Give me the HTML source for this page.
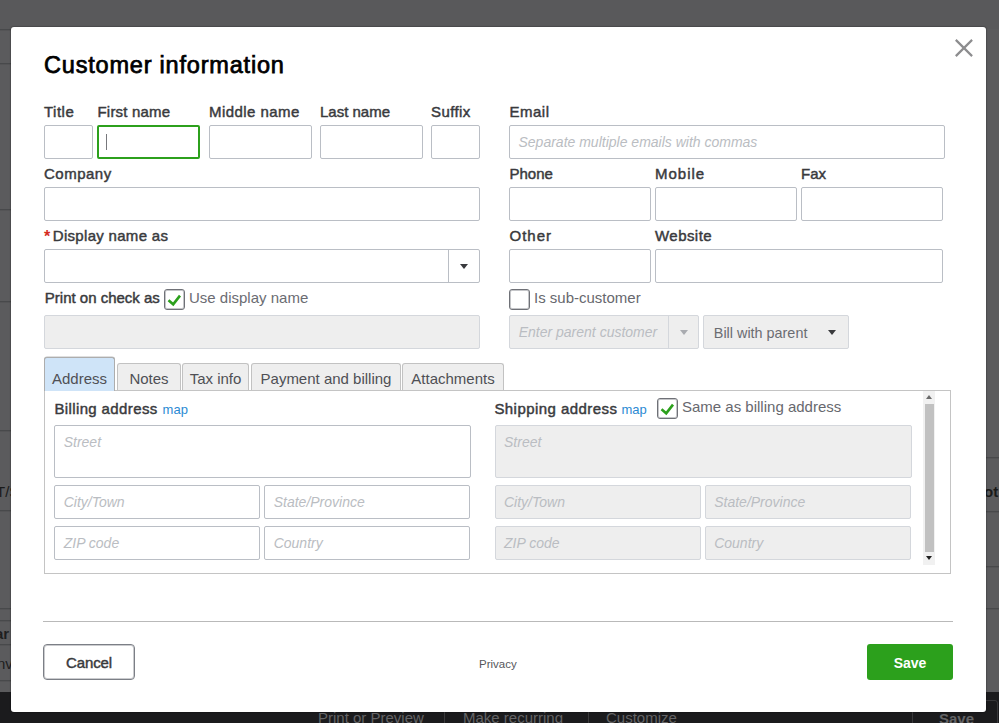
<!DOCTYPE html><html><head><meta charset="utf-8"><style>
*{margin:0;padding:0;box-sizing:border-box}
html,body{width:999px;height:723px;overflow:hidden;background:#59595b;font-family:"Liberation Sans",sans-serif}
.t{position:absolute;white-space:nowrap}
.bg{position:absolute;left:0;top:29px;width:999px;height:663px;background:#5b5b5d}
.bgl{position:absolute;height:1px;background:#48494b;box-shadow:0 1px 0 rgba(72,73,75,.35)}
.foot{position:absolute;left:0;top:692px;width:999px;height:31px;background:#1b1b1d}
.fsep{position:absolute;top:712px;width:1px;height:11px;background:#3a3a3c}
.fbtn{position:absolute;left:912px;top:700px;width:86px;height:40px;border:1px solid #38383a;border-radius:3px}
.modal{position:absolute;left:11px;top:27px;width:975px;height:685px;background:#fff;border-radius:3px;box-shadow:0 0 1px 1px rgba(0,0,0,.18)}
.x{position:absolute}
.inp{position:absolute;border:1px solid #babec5;border-radius:2px;background:#fff}
.inp.focus{border:2px solid #2ca01c}
.inp.dis{background:#eeeeee;border-color:#d4d7dc}
.caret{position:absolute;width:1px;height:16px;background:#77787c}
.vsep{position:absolute;width:1px}
.tri{position:absolute;width:0;height:0;border-left:4.5px solid transparent;border-right:4.5px solid transparent;border-top:5px solid #393a3d}
.tri.sm{border-left-width:3.5px;border-right-width:3.5px;border-top-width:4px}
.chk{position:absolute;border:1px solid #6f7177;border-radius:3px;background:#fff;box-shadow:inset 0 0 0 1px rgba(111,113,119,.4)}
.panel{position:absolute;left:44px;top:390px;width:907px;height:184px;border:1px solid #c4c4c4;background:#fff}
.tab{position:absolute;border:1px solid #c2c2c2;border-bottom:0;border-radius:3px 3px 0 0;background:#eeeeee;font-size:15px;color:#4f5055;text-align:center}
.tab span{position:absolute;left:0;right:0;top:6.5px;line-height:15px}
.tab.act{background:#cfe4f8;border-color:#adadad;border-width:1px 1px 0 1px;box-shadow:0 -0.5px 0 rgba(150,150,150,.6)}
.tab.act span{top:12.5px}
.sbtrack{position:absolute;left:923px;top:391px;width:12px;height:174px;background:#f1f1f1}
.sbthumb{position:absolute;left:925px;top:404px;width:9px;height:148px;background:#c1c1c1}
.hr{position:absolute;left:43px;top:621px;width:910px;height:1px;background:#b9b9b9}
.btn{position:absolute;top:644px;height:36px;border-radius:4px;font-size:14px;font-weight:bold;text-align:center;line-height:34px}
.cancel{left:43px;width:92px;border:1px solid #7c7f86;color:#393a3d;background:#fff;box-shadow:inset 0 0 0 1px rgba(124,127,134,.4);line-height:36px;font-weight:normal;font-size:15px;-webkit-text-stroke:0.45px #393a3d;letter-spacing:-0.15px}
.save{left:867px;width:86px;background:#2ca01c;color:#fff;line-height:36px;padding-top:1px;border-radius:3px}
</style></head><body>
<div class="bg"></div>
<div class="bgl" style="left:0;top:29px;width:12px;"></div>
<div class="bgl" style="left:0;top:63px;width:12px;"></div>
<div class="bgl" style="left:0;top:209px;width:12px;"></div>
<div class="bgl" style="left:0;top:301px;width:12px;"></div>
<div class="bgl" style="left:0;top:430px;width:12px;"></div>
<div class="bgl" style="left:0;top:510px;width:12px;"></div>
<div class="bgl" style="left:0;top:608px;width:12px;"></div>
<div class="bgl" style="left:0;top:620px;width:12px;"></div>
<div class="bgl" style="left:0;top:644px;width:12px;"></div>
<div class="bgl" style="left:0;top:680px;width:12px;"></div>
<div class="bgl" style="left:985px;top:457px;width:14px;"></div>
<div class="bgl" style="left:985px;top:511px;width:14px;"></div>
<div class="bgl" style="left:985px;top:566px;width:14px;"></div>
<div class="bgl" style="left:985px;top:608px;width:14px;"></div>
<div class="foot"></div>
<div class="t" style="left:-4px;top:484.30px;font-size:15px;line-height:15px;font-weight:normal;color:#1a1a1a;font-style:normal;">T/S</div>
<div class="t" style="left:-5px;top:626.00px;font-size:15px;line-height:15px;font-weight:bold;color:#1e1e1f;font-style:normal;">ar</div>
<div class="t" style="left:-3px;top:656.30px;font-size:15px;line-height:15px;font-weight:normal;color:#1e1e1f;font-style:normal;">nv</div>
<div class="t" style="left:984px;top:484.30px;font-size:15px;line-height:15px;font-weight:bold;color:#1a1a1a;font-style:normal;">ot</div>
<div class="t" style="left:318px;top:709.80px;font-size:15px;line-height:15px;font-weight:normal;color:#646466;font-style:normal;">Print or Preview</div>
<div class="fsep" style="left:444px"></div>
<div class="t" style="left:463px;top:709.80px;font-size:15px;line-height:15px;font-weight:normal;color:#646466;font-style:normal;">Make recurring</div>
<div class="fsep" style="left:588px"></div>
<div class="t" style="left:606px;top:709.80px;font-size:15px;line-height:15px;font-weight:normal;color:#646466;font-style:normal;">Customize</div>
<div class="fbtn"></div>
<div class="t" style="left:939px;top:711.30px;font-size:15px;line-height:15px;font-weight:bold;color:#646466;font-style:normal;">Save</div>
<div class="modal"></div>
<div class="t" style="left:44px;top:54.31px;font-size:23.5px;line-height:23.5px;font-weight:normal;color:#000;font-style:normal;letter-spacing:0.8px;-webkit-text-stroke:0.75px #000;">Customer information</div>
<svg class="x" style="left:950px;top:34px" width="28" height="28" viewBox="0 0 28 28"><path d="M5.8 5.9 L22.1 22.1 M22.1 5.9 L5.8 22.1" stroke="#8d8d8f" stroke-width="2.2"/></svg>
<div class="t" style="left:44px;top:104.10px;font-size:15px;line-height:15px;font-weight:normal;color:#393a3d;font-style:normal;-webkit-text-stroke:0.45px #393a3d;letter-spacing:0.5px;">Title</div>
<div class="t" style="left:97.5px;top:104.10px;font-size:15px;line-height:15px;font-weight:normal;color:#393a3d;font-style:normal;-webkit-text-stroke:0.45px #393a3d;letter-spacing:0.2px;">First name</div>
<div class="t" style="left:209px;top:104.10px;font-size:15px;line-height:15px;font-weight:normal;color:#393a3d;font-style:normal;-webkit-text-stroke:0.45px #393a3d;"><span style="letter-spacing:0.45px">Middle name</span></div>
<div class="t" style="left:320px;top:104.10px;font-size:15px;line-height:15px;font-weight:normal;color:#393a3d;font-style:normal;-webkit-text-stroke:0.45px #393a3d;">Last name</div>
<div class="t" style="left:431px;top:104.10px;font-size:15px;line-height:15px;font-weight:normal;color:#393a3d;font-style:normal;-webkit-text-stroke:0.45px #393a3d;letter-spacing:0.4px;">Suffix</div>
<div class="t" style="left:509.5px;top:104.10px;font-size:15px;line-height:15px;font-weight:normal;color:#393a3d;font-style:normal;-webkit-text-stroke:0.45px #393a3d;letter-spacing:0.5px;">Email</div>
<div class="inp" style="left:44px;top:125px;width:49px;height:34px;"></div>
<div class="inp focus" style="left:97px;top:125px;width:103px;height:34px;"></div>
<div class="caret" style="left:106px;top:134px;"></div>
<div class="inp" style="left:209px;top:125px;width:103px;height:34px;"></div>
<div class="inp" style="left:320px;top:125px;width:103px;height:34px;"></div>
<div class="inp" style="left:431px;top:125px;width:49px;height:34px;"></div>
<div class="inp" style="left:509px;top:125px;width:436px;height:34px;"></div>
<div class="t" style="left:518.5px;top:134.65px;font-size:14px;line-height:14px;font-weight:normal;color:#babdc2;font-style:italic;">Separate multiple emails with commas</div>
<div class="t" style="left:44px;top:166.10px;font-size:15px;line-height:15px;font-weight:normal;color:#393a3d;font-style:normal;-webkit-text-stroke:0.45px #393a3d;letter-spacing:0.5px;">Company</div>
<div class="t" style="left:509.5px;top:166.10px;font-size:15px;line-height:15px;font-weight:normal;color:#393a3d;font-style:normal;-webkit-text-stroke:0.45px #393a3d;">Phone</div>
<div class="t" style="left:655px;top:166.10px;font-size:15px;line-height:15px;font-weight:normal;color:#393a3d;font-style:normal;-webkit-text-stroke:0.45px #393a3d;letter-spacing:1.0px;">Mobile</div>
<div class="t" style="left:801px;top:166.10px;font-size:15px;line-height:15px;font-weight:normal;color:#393a3d;font-style:normal;-webkit-text-stroke:0.45px #393a3d;">Fax</div>
<div class="inp" style="left:44px;top:187px;width:436px;height:34px;"></div>
<div class="inp" style="left:509px;top:187px;width:142px;height:34px;"></div>
<div class="inp" style="left:655px;top:187px;width:142px;height:34px;"></div>
<div class="inp" style="left:801px;top:187px;width:142px;height:34px;"></div>
<div class="t" style="left:44px;top:229.46px;font-size:16px;line-height:16px;font-weight:bold;color:#d52b1e;font-style:normal;">*</div>
<div class="t" style="left:52.8px;top:228.10px;font-size:15px;line-height:15px;font-weight:normal;color:#393a3d;font-style:normal;-webkit-text-stroke:0.45px #393a3d;letter-spacing:0.3px;">Display name as</div>
<div class="t" style="left:509.5px;top:228.10px;font-size:15px;line-height:15px;font-weight:normal;color:#393a3d;font-style:normal;-webkit-text-stroke:0.45px #393a3d;letter-spacing:1.0px;">Other</div>
<div class="t" style="left:655px;top:228.10px;font-size:15px;line-height:15px;font-weight:normal;color:#393a3d;font-style:normal;-webkit-text-stroke:0.45px #393a3d;letter-spacing:0.45px;">Website</div>
<div class="inp" style="left:44px;top:249px;width:436px;height:34px;"></div>
<div class="vsep" style="left:448px;top:249px;height:34px;background:#babec5"></div>
<div class="tri" style="left:460px;top:264px;border-top-color:#393a3d"></div>
<div class="inp" style="left:509px;top:249px;width:142px;height:34px;"></div>
<div class="inp" style="left:655px;top:249px;width:288px;height:34px;"></div>
<div class="t" style="left:44.8px;top:290.30px;font-size:15px;line-height:15px;font-weight:normal;color:#393a3d;font-style:normal;-webkit-text-stroke:0.45px #393a3d;">Print on check as</div>
<div class="chk" style="left:164px;top:289px;width:21px;height:21px;"></div>
<svg class="t" style="left:164px;top:289px" width="21" height="21" viewBox="0 0 21 21"><path d="M4.5 11.3 L9.2 15.3 L16 6.6" fill="none" stroke="#2ca01c" stroke-width="2.6"/></svg>
<div class="t" style="left:189px;top:290.30px;font-size:15px;line-height:15px;font-weight:normal;color:#6b6c72;font-style:normal;">Use display name</div>
<div class="inp dis" style="left:44px;top:315px;width:436px;height:34px;"></div>
<div class="chk" style="left:509px;top:289px;width:21px;height:21px;"></div>
<div class="t" style="left:534px;top:290.10px;font-size:15px;line-height:15px;font-weight:normal;color:#67686e;font-style:normal;">Is sub-customer</div>
<div class="inp dis" style="left:509px;top:315px;width:190px;height:34px;"></div>
<div class="vsep" style="left:668px;top:315px;height:34px;background:#d4d7dc"></div>
<div class="t" style="left:518.7px;top:324.65px;font-size:14px;line-height:14px;font-weight:normal;color:#babdc2;font-style:italic;">Enter parent customer</div>
<div class="tri" style="left:680px;top:330px;border-top-color:#a9abb0"></div>
<div class="inp dis" style="left:703px;top:315px;width:146px;height:34px;"></div>
<div class="t" style="left:713.8px;top:325.81px;font-size:14.4px;line-height:14.4px;font-weight:normal;color:#6b6c72;font-style:normal;">Bill with parent</div>
<div class="tri" style="left:828px;top:330px;border-top-color:#393a3d"></div>
<div class="panel"></div>
<div class="tab act" style="left:44px;top:357px;width:71px;height:34px;"><span>Address</span></div>
<div class="tab" style="left:117px;top:363px;width:64px;height:27px;"><span>Notes</span></div>
<div class="tab" style="left:182px;top:363px;width:67px;height:27px;"><span>Tax info</span></div>
<div class="tab" style="left:251px;top:363px;width:150px;height:27px;"><span>Payment and billing</span></div>
<div class="tab" style="left:402px;top:363px;width:102px;height:27px;"><span>Attachments</span></div>
<div class="t" style="left:54.4px;top:401.30px;font-size:15px;line-height:15px;font-weight:normal;color:#393a3d;font-style:normal;-webkit-text-stroke:0.45px #393a3d;letter-spacing:0.38px;">Billing address</div>
<div class="t" style="left:162.6px;top:403.00px;font-size:13px;line-height:13px;font-weight:normal;color:#2b8ad3;font-style:normal;">map</div>
<div class="inp" style="left:54px;top:425px;width:417px;height:53px;"></div>
<div class="t" style="left:63.7px;top:435.15px;font-size:14px;line-height:14px;font-weight:normal;color:#babdc2;font-style:italic;">Street</div>
<div class="inp" style="left:54px;top:485px;width:206px;height:34px;"></div>
<div class="t" style="left:63.7px;top:494.75px;font-size:14px;line-height:14px;font-weight:normal;color:#babdc2;font-style:italic;">City/Town</div>
<div class="inp" style="left:264px;top:485px;width:206px;height:34px;"></div>
<div class="t" style="left:273.7px;top:494.75px;font-size:14px;line-height:14px;font-weight:normal;color:#babdc2;font-style:italic;">State/Province</div>
<div class="inp" style="left:54px;top:526px;width:206px;height:34px;"></div>
<div class="t" style="left:63.7px;top:535.75px;font-size:14px;line-height:14px;font-weight:normal;color:#babdc2;font-style:italic;">ZIP code</div>
<div class="inp" style="left:264px;top:526px;width:206px;height:34px;"></div>
<div class="t" style="left:273.7px;top:535.75px;font-size:14px;line-height:14px;font-weight:normal;color:#babdc2;font-style:italic;">Country</div>
<div class="t" style="left:494.4px;top:401.30px;font-size:15px;line-height:15px;font-weight:normal;color:#393a3d;font-style:normal;-webkit-text-stroke:0.45px #393a3d;letter-spacing:0.44px;">Shipping address</div>
<div class="t" style="left:621.5px;top:403.00px;font-size:13px;line-height:13px;font-weight:normal;color:#2b8ad3;font-style:normal;">map</div>
<div class="chk" style="left:657px;top:398px;width:21px;height:21px;"></div>
<svg class="t" style="left:657px;top:398px" width="21" height="21" viewBox="0 0 21 21"><path d="M4.5 11.3 L9.2 15.3 L16 6.6" fill="none" stroke="#2ca01c" stroke-width="2.6"/></svg>
<div class="t" style="left:682px;top:399.30px;font-size:15px;line-height:15px;font-weight:normal;color:#67686e;font-style:normal;">Same as billing address</div>
<div class="inp dis" style="left:495px;top:425px;width:417px;height:53px;"></div>
<div class="t" style="left:504px;top:435.15px;font-size:14px;line-height:14px;font-weight:normal;color:#babdc2;font-style:italic;">Street</div>
<div class="inp dis" style="left:495px;top:485px;width:206px;height:34px;"></div>
<div class="t" style="left:504px;top:494.75px;font-size:14px;line-height:14px;font-weight:normal;color:#babdc2;font-style:italic;">City/Town</div>
<div class="inp dis" style="left:705px;top:485px;width:206px;height:34px;"></div>
<div class="t" style="left:714.2px;top:494.75px;font-size:14px;line-height:14px;font-weight:normal;color:#babdc2;font-style:italic;">State/Province</div>
<div class="inp dis" style="left:495px;top:526px;width:206px;height:34px;"></div>
<div class="t" style="left:504px;top:535.75px;font-size:14px;line-height:14px;font-weight:normal;color:#babdc2;font-style:italic;">ZIP code</div>
<div class="inp dis" style="left:705px;top:526px;width:206px;height:34px;"></div>
<div class="t" style="left:714.2px;top:535.75px;font-size:14px;line-height:14px;font-weight:normal;color:#babdc2;font-style:italic;">Country</div>
<div class="sbtrack"></div><div class="sbthumb"></div>
<div class="tri sm" style="left:926px;top:395px;border-top:0;border-bottom:4px solid #6a6a6a"></div>
<div class="tri sm" style="left:926px;top:556px;border-top-color:#202020"></div>
<div class="hr"></div>
<div class="btn cancel">Cancel</div>
<div class="btn save">Save</div>
<div class="t" style="left:479px;top:658.77px;font-size:11.5px;line-height:11.5px;font-weight:normal;color:#56575c;font-style:normal;">Privacy</div>
</body></html>
